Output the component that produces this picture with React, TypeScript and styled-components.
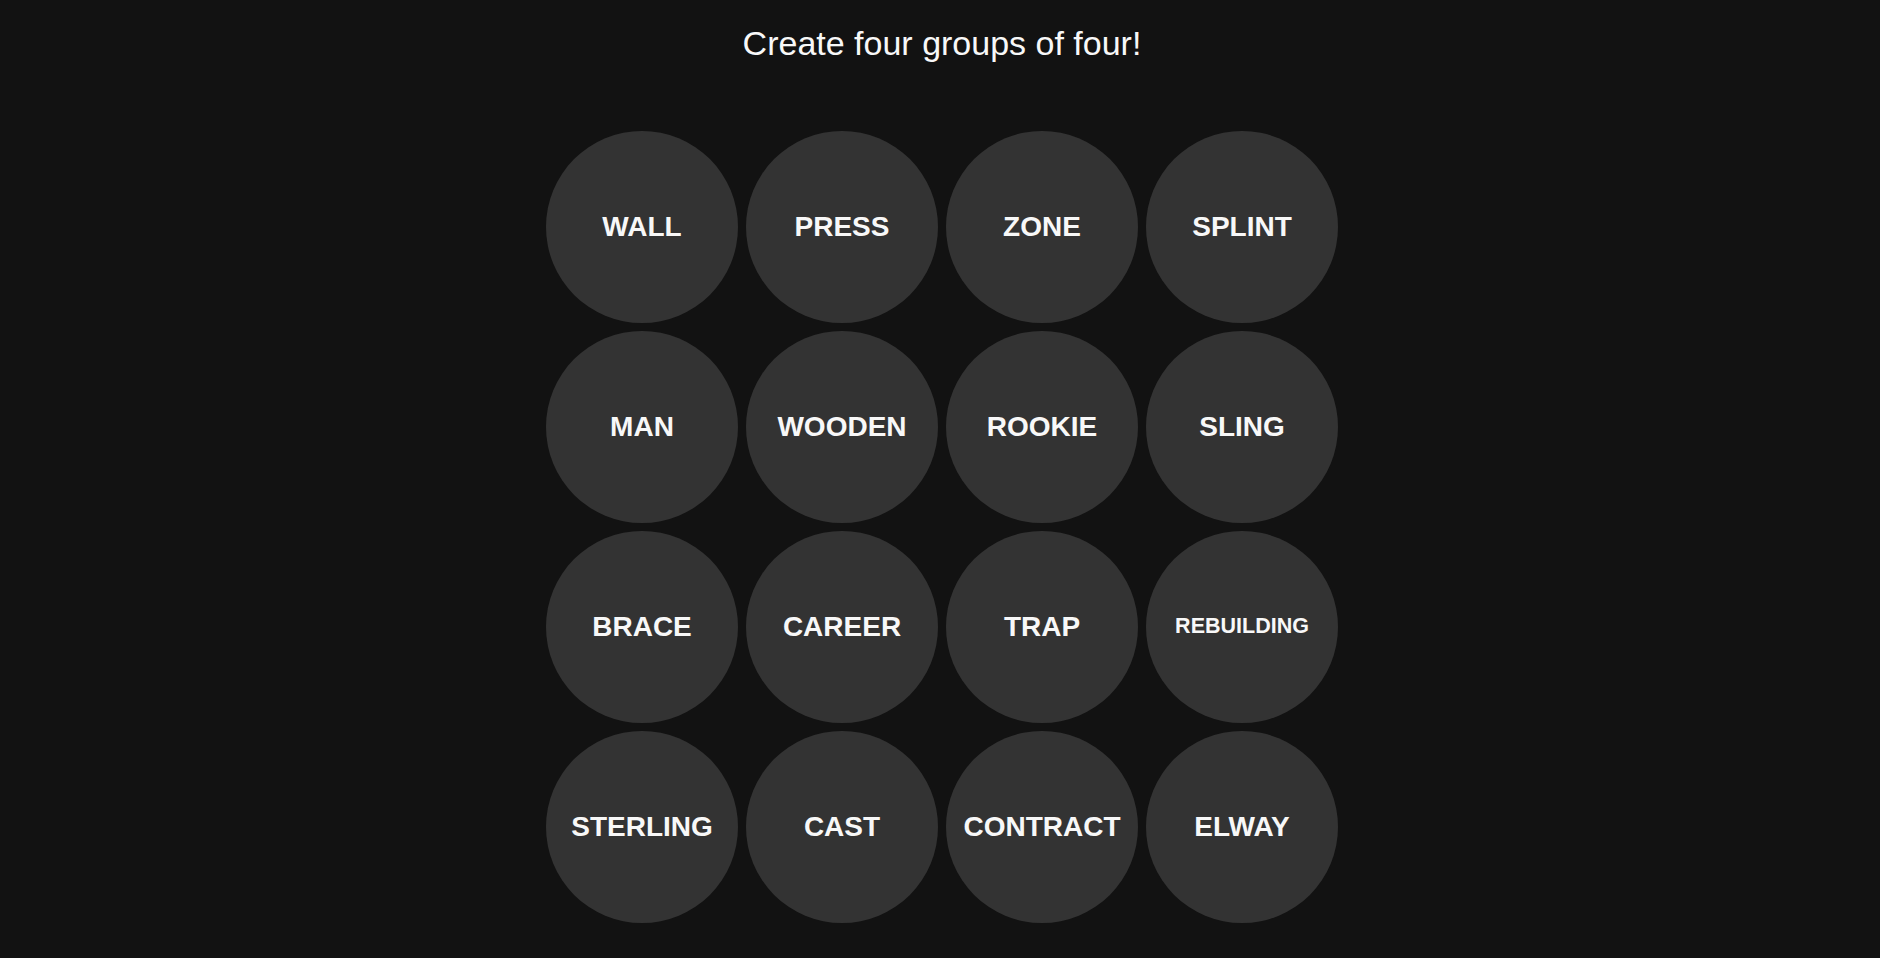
import styled, { createGlobalStyle } from "styled-components"

const words = [
   "WALL",
   "PRESS",
   "ZONE",
   "SPLINT",
   "MAN",
   "WOODEN",
   "ROOKIE",
   "SLING",
   "BRACE",
   "CAREER",
   "TRAP",
   "REBUILDING",
   "STERLING",
   "CAST",
   "CONTRACT",
   "ELWAY",
]

const App = () => {
   return (
      <>
         <GlobalStyle />
         <Page>
            <Title>Create four groups of four!</Title>
            <Board>
               {words.map((word) => (
                  <Tile key={word} small={word.length > 9}>
                     {word}
                  </Tile>
               ))}
            </Board>
         </Page>
      </>
   )
}

export default App

// Styled Components

const GlobalStyle = createGlobalStyle`
   html, body {
      margin: 0;
      padding: 0;
      background-color: #121212;
   }
   body {
      font-family: "Liberation Sans", Arial, sans-serif;
      color: #f8f8f8;
   }
`

const Page = styled.main`
   display: flex;
   flex-direction: column;
   align-items: center;
   min-height: 958px;
   box-sizing: border-box;
   padding: 23px 0 0 4px;
`

const Title = styled.h1`
   margin: 0;
   font-size: 34px;
   line-height: 40px;
   font-weight: 400;
   color: #f8f8f8;
`

const Board = styled.div`
   display: grid;
   grid-template-columns: repeat(4, 192px);
   grid-auto-rows: 192px;
   gap: 8px;
   margin-top: 68px;
`

const Tile = styled.button<{ small: boolean }>`
   display: flex;
   align-items: center;
   justify-content: center;
   padding: 0;
   border: none;
   border-radius: 50%;
   background-color: #333333;
   color: #f8f8f8;
   font-family: "Liberation Sans", Arial, sans-serif;
   font-weight: 700;
   font-size: ${({ small }) => (small ? "21.5px" : "28px")};
   line-height: 1;
   cursor: pointer;
`
